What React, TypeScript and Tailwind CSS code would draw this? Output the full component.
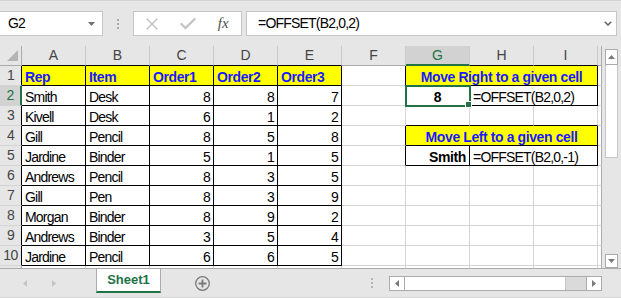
import React from 'react';
import clsx from 'clsx';
import { X, Check } from 'lucide-react';

interface GridCell {
  text?: string;
  span?: 1 | 2 | 3;
  align?: 'left' | 'right' | 'center';
  bold?: boolean;
  blue?: boolean;
  fill?: boolean;
  edgeR?: boolean;
  edgeB?: boolean;
  selected?: boolean;
}

const columns = ['A', 'B', 'C', 'D', 'E', 'F', 'G', 'H', 'I'];

const sales: [string, string, number, number, number][] = [
  ['Smith', 'Desk', 8, 8, 7],
  ['Kivell', 'Desk', 6, 1, 2],
  ['Gill', 'Pencil', 8, 5, 8],
  ['Jardine', 'Binder', 5, 1, 5],
  ['Andrews', 'Pencil', 8, 3, 5],
  ['Gill', 'Pen', 8, 3, 9],
  ['Morgan', 'Binder', 8, 9, 2],
  ['Andrews', 'Binder', 3, 5, 4],
  ['Jardine', 'Pencil', 6, 6, 5],
];

const spanWidth = { 1: 'w-[64px]', 2: 'w-[128px]', 3: 'w-[192px]' };
const alignClass = { left: 'justify-start', right: 'justify-end', center: 'justify-center' };

function buildRow(row: number): GridCell[] {
  let table: GridCell[] = [];
  if (row === 1) {
    table = ['Rep', 'Item', 'Order1', 'Order2', 'Order3'].map((t) => ({
      text: t,
      bold: true,
      blue: true,
      fill: true,
      edgeR: true,
      edgeB: true,
    }));
  } else if (row <= 10) {
    const [rep, item, o1, o2, o3] = sales[row - 2];
    table = [
      { text: rep, edgeR: true, edgeB: true },
      { text: item, edgeR: true, edgeB: true },
      ...[o1, o2, o3].map((n) => ({ text: String(n), align: 'right' as const, edgeR: true, edgeB: true })),
    ];
  } else {
    table = [{}, {}, {}, {}, {}];
  }

  const f: GridCell = { edgeR: [1, 2, 4, 5].includes(row) };

  let right: GridCell[] = [{}, {}, {}];
  if (row === 1 || row === 4) {
    right = [
      {
        text: row === 1 ? 'Move Right to a given cell' : 'Move Left to a given cell',
        span: 3,
        align: 'center',
        bold: true,
        blue: true,
        fill: true,
        edgeR: true,
        edgeB: true,
      },
    ];
  } else if (row === 2) {
    right = [
      { text: '8', bold: true, align: 'center', edgeR: true, edgeB: true, selected: true },
      { text: '=OFFSET(B2,0,2)', span: 2, edgeR: true, edgeB: true },
    ];
  } else if (row === 3) {
    right = [{ edgeB: true }, { edgeB: true }, { edgeB: true }];
  } else if (row === 5) {
    right = [
      { text: 'Smith', bold: true, align: 'right', edgeR: true, edgeB: true },
      { text: '=OFFSET(B2,0,-1)', span: 2, edgeR: true, edgeB: true },
    ];
  }

  return [...table, f, ...right];
}

function SheetCell({ cell }: { cell: GridCell }) {
  return (
    <div
      className={clsx(
        'relative flex h-[20px] shrink-0 items-end whitespace-nowrap border-r border-b px-[3px] text-[14px] leading-[16px]',
        spanWidth[cell.span ?? 1],
        alignClass[cell.align ?? 'left'],
        cell.edgeR ? 'border-r-black' : 'border-r-[#d4d4d4]',
        cell.edgeB ? 'border-b-black' : 'border-b-[#d4d4d4]',
        cell.fill ? 'bg-[#ffff00]' : 'bg-white',
        cell.bold ? 'font-bold tracking-[-0.4px]' : 'tracking-[-0.8px]',
        cell.blue ? 'text-[#1a1aff]' : 'text-black'
      )}
    >
      {cell.text}
      {cell.selected && (
        <div className="absolute left-[-1px] top-[-1px] z-10 h-[22px] w-[66px] border-2 border-[#217346]">
          <div className="absolute -bottom-[3px] -right-[3px] h-[7px] w-[7px] border border-white bg-[#217346]" />
        </div>
      )}
    </div>
  );
}

function FormulaBar() {
  return (
    <div className="flex h-[46px] items-start border-t border-[#d4d4d4] pt-[10px]">
      <div className="flex h-[25px] w-[103px] items-center justify-between border border-l-0 border-[#c6c6c6] bg-white pl-[8px] pr-[7px] text-[14px] tracking-[-0.8px] text-black">
        <span>G2</span>
        <svg width="7" height="4" viewBox="0 0 7 4">
          <path d="M0 0H7L3.5 4Z" fill="#707070" />
        </svg>
      </div>
      <div className="flex h-[25px] w-[30px] flex-col items-center justify-center gap-[2px]">
        <span className="h-[2px] w-[2px] bg-[#a8a8a8]" />
        <span className="h-[2px] w-[2px] bg-[#a8a8a8]" />
        <span className="h-[2px] w-[2px] bg-[#a8a8a8]" />
      </div>
      <div className="flex h-[25px] w-[109px] items-center border border-[#c6c6c6] bg-white">
        <div className="flex w-[36px] justify-center">
          <X size={20} strokeWidth={1.4} color="#bcbcbc" />
        </div>
        <div className="flex w-[36px] justify-center">
          <Check size={20} strokeWidth={2.8} color="#c4c4c4" />
        </div>
        <div className="flex w-[36px] justify-center font-['Liberation_Serif',serif] text-[15px] italic text-[#505050]">
          fx
        </div>
      </div>
      <div className="ml-[4px] mr-[4px] flex h-[25px] flex-1 items-center justify-between border border-[#c6c6c6] bg-white pl-[11px] pr-[4px] text-[14px] tracking-[-0.8px] text-black">
        <span>=OFFSET(B2,0,2)</span>
        <svg width="8" height="5" viewBox="0 0 8 5">
          <path d="M0.8 0.8L4 4L7.2 0.8" fill="none" stroke="#666" strokeWidth="1.6" />
        </svg>
      </div>
    </div>
  );
}

function VerticalScroll() {
  return (
    <div className="flex w-[19px] flex-col pl-[3px] pt-[3px]">
      <div className="flex h-[16px] w-[13px] items-center justify-center border border-[#ababab] bg-white">
        <svg width="7" height="4" viewBox="0 0 7 4">
          <path d="M0 4H7L3.5 0Z" fill="#7a7a7a" />
        </svg>
      </div>
      <div className="h-[93px] w-[13px] border-x border-b border-[#c6c6c6] bg-white" />
      <div className="flex-1" />
      <div className="flex h-[14px] w-[13px] items-center justify-center border border-[#ababab] bg-white">
        <svg width="7" height="4" viewBox="0 0 7 4">
          <path d="M0 0H7L3.5 4Z" fill="#7a7a7a" />
        </svg>
      </div>
    </div>
  );
}

function TabBar() {
  return (
    <div className="flex h-[30px] border-t border-b border-t-[#ababab] border-b-[#d6d6d6]">
      <div className="flex w-[96px] items-center pl-[23px]">
        <svg width="4" height="7" viewBox="0 0 4 7">
          <path d="M4 0V7L0 3.5Z" fill="#c4c4c4" />
        </svg>
        <svg className="ml-[25px]" width="4" height="7" viewBox="0 0 4 7">
          <path d="M0 0V7L4 3.5Z" fill="#c4c4c4" />
        </svg>
      </div>
      <div className="flex h-[24px] w-[65px] items-center justify-center border-x border-b-2 border-x-[#ababab] border-b-[#217346] bg-white text-[13px] font-bold text-[#217346]">
        Sheet1
      </div>
      <div className="w-[34px]" />
      <div className="flex w-[15px] items-center">
        <svg width="15" height="15" viewBox="0 0 15 15">
          <circle cx="7.5" cy="7.5" r="6.8" fill="none" stroke="#7a7a7a" strokeWidth="1.3" />
          <path d="M7.5 3.6V11.4M3.6 7.5H11.4" stroke="#7a7a7a" strokeWidth="1.8" />
        </svg>
      </div>
      <div className="w-[160px]" />
      <div className="flex w-[3px] flex-col items-center justify-center gap-[2px]">
        <span className="h-[2px] w-[2px] bg-[#b4b4b4]" />
        <span className="h-[2px] w-[2px] bg-[#b4b4b4]" />
        <span className="h-[2px] w-[2px] bg-[#b4b4b4]" />
      </div>
      <div className="w-[16px]" />
      <div className="mt-[7px] flex h-[15px] w-[213px] border border-[#ababab]">
        <div className="flex w-[15px] items-center justify-center border-r border-[#ababab] bg-white">
          <svg width="4" height="7" viewBox="0 0 4 7">
            <path d="M4 0V7L0 3.5Z" fill="#7a7a7a" />
          </svg>
        </div>
        <div className="w-[161px] border-r border-[#c6c6c6] bg-white" />
        <div className="flex-1 bg-[#dadada]" />
        <div className="flex w-[15px] items-center justify-center border-l border-[#ababab] bg-white">
          <svg width="4" height="7" viewBox="0 0 4 7">
            <path d="M0 0V7L4 3.5Z" fill="#7a7a7a" />
          </svg>
        </div>
      </div>
    </div>
  );
}

export default function App() {
  const rows = Array.from({ length: 11 }, (_, i) => i + 1);

  return (
    <div className="h-[298px] w-[621px] overflow-hidden bg-[#e6e6e6] font-['Liberation_Sans',Arial,sans-serif] text-black">
      <FormulaBar />

      <div className="flex h-[222px]">
        <div className="flex w-[602px] flex-col overflow-hidden">
          {/* column headers */}
          <div className="flex h-[20px] shrink-0">
            <div className="relative h-[20px] w-[22px] shrink-0 border-r border-b border-[#ababab] bg-[#e6e6e6]">
              <svg className="absolute bottom-[4px] right-[3px]" width="11" height="11" viewBox="0 0 11 11">
                <path d="M11 0V11H0Z" fill="#b4b4b4" />
              </svg>
            </div>
            {columns.map((col) => {
              const active = col === 'G';
              return (
                <div
                  key={col}
                  className={clsx(
                    'flex h-[20px] w-[64px] shrink-0 items-center justify-center border-r border-r-[#cacaca] text-[14px]',
                    active
                      ? 'border-b-2 border-b-[#217346] bg-[#d2d2d2] text-[#217346]'
                      : 'border-b bg-[#e6e6e6] text-[#444]',
                    !active && (col === 'F' ? 'border-b-[#ababab]' : 'border-b-black')
                  )}
                >
                  {col}
                </div>
              );
            })}
            <div className="h-[20px] w-[4px] shrink-0 border-r border-b border-[#ababab] bg-[#e6e6e6]" />
          </div>

          {rows.map((row) => {
            const active = row === 2;
            return (
              <div key={row} className="flex h-[20px] shrink-0">
                <div
                  className={clsx(
                    'flex h-[20px] w-[22px] shrink-0 items-center justify-center border-b border-b-[#d4d4d4] text-[14px] tracking-[-0.6px]',
                    active
                      ? 'border-r-2 border-r-[#217346] bg-[#d2d2d2] text-[#217346]'
                      : 'border-r bg-[#e6e6e6] text-[#444]',
                    !active && (row <= 10 ? 'border-r-black' : 'border-r-[#ababab]')
                  )}
                >
                  {/* row 11 is only a sliver at the bottom edge */}
                  {row <= 10 ? row : null}
                </div>
                {buildRow(row).map((cell, i) => (
                  <SheetCell key={i} cell={cell} />
                ))}
                <div className="h-[20px] w-[4px] shrink-0 border-r border-b border-r-[#ababab] border-b-[#d4d4d4] bg-white" />
              </div>
            );
          })}
        </div>

        <VerticalScroll />
      </div>

      <TabBar />
    </div>
  );
}
